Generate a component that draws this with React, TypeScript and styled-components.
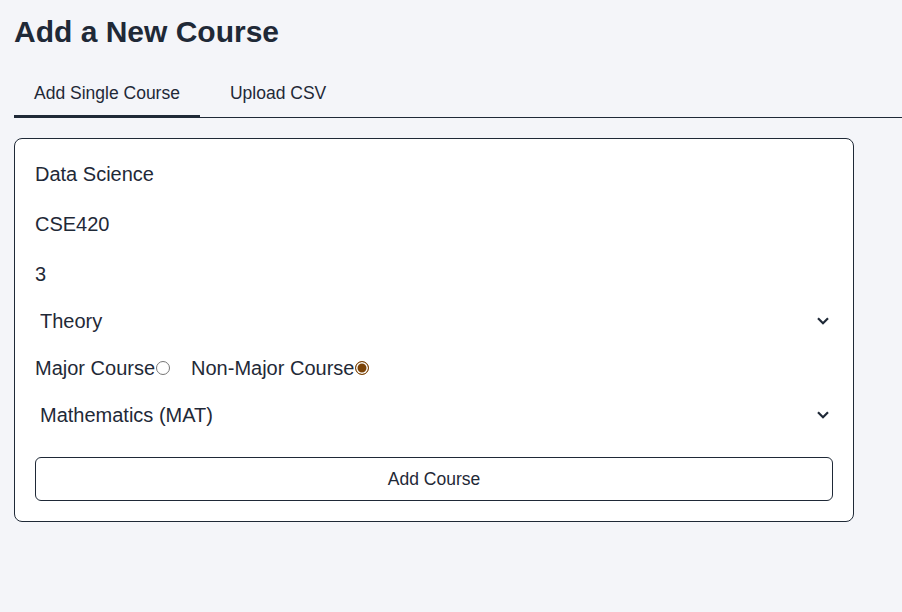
import React, { useState } from "react";
import styled, { createGlobalStyle, css } from "styled-components";

const GlobalStyle = createGlobalStyle`
  html, body { margin: 0; padding: 0; background: #f4f5f9; }
  body { font-family: "Liberation Sans", Arial, sans-serif; color: #1f2937; }
  * { box-sizing: border-box; }
`;

const chevron = `url("data:image/svg+xml;utf8,<svg xmlns='http://www.w3.org/2000/svg' width='12' height='8' viewBox='0 0 12 8'><polyline points='1,1.3 6,6.3 11,1.3' fill='none' stroke='%231f2937' stroke-width='2.2'/></svg>")`;

const Page = styled.div`
  padding: 14px 0 40px 14px;
  min-height: 612px;
`;

const Title = styled.h1`
  margin: 0;
  font-size: 30px;
  line-height: 36px;
  font-weight: 700;
  color: #1f2937;
`;

const TabBar = styled.div`
  display: flex;
  margin-top: 21px;
  border-bottom: 1px solid #1f2937;
`;

const Tab = styled.button<{ $active?: boolean }>`
  appearance: none;
  background: transparent;
  border: none;
  border-bottom: 3px solid transparent;
  margin-bottom: -1px;
  padding: 8px 20px 8px 20px;
  margin-right: 10px;
  font-family: inherit;
  font-size: 17.5px;
  line-height: 28px;
  color: #1f2937;
  cursor: pointer;
  ${(p) =>
    p.$active &&
    css`
      border-bottom-color: #1f2937;
    `}
`;

const Card = styled.form`
  margin-top: 20px;
  width: 840px;
  background: #ffffff;
  border: 1px solid #1f2937;
  border-radius: 8px;
  padding: 20px;
  display: flex;
  flex-direction: column;
  gap: 20px;
`;

const TextInput = styled.input`
  border: none;
  outline: none;
  background: transparent;
  padding: 0;
  height: 30px;
  font-family: inherit;
  font-size: 20px;
  color: #1f2937;
`;

const Select = styled.select`
  appearance: none;
  border: none;
  outline: none;
  background: transparent ${chevron} no-repeat right 4px center;
  padding: 0 24px 0 5px;
  height: 24px;
  font-family: inherit;
  font-size: 20px;
  color: #1f2937;
`;

const RadioRow = styled.div`
  display: flex;
  align-items: center;
  gap: 21px;
  height: 30px;
`;

const RadioLabel = styled.label`
  display: flex;
  align-items: center;
  font-size: 20px;
  color: #1f2937;
`;

const Radio = styled.input`
  appearance: none;
  margin: 0 0 0 1px;
  width: 14px;
  height: 14px;
  border-radius: 50%;
  border: 1px solid #767676;
  background: #fff;
  &:checked {
    border: 1.5px solid #7b4306;
    background: #7b4306;
    box-shadow: inset 0 0 0 1.5px #fff;
  }
`;

const SubmitButton = styled.button`
  margin-top: 10px;
  height: 44px;
  background: #fff;
  border: 1px solid #1f2937;
  border-radius: 6px;
  font-family: inherit;
  font-size: 17.5px;
  color: #1f2937;
  cursor: pointer;
`;

export default function App() {
  const [tab, setTab] = useState(0);
  const [major, setMajor] = useState(false);
  return (
    <Page>
      <GlobalStyle />
      <Title>Add a New Course</Title>
      <TabBar>
        <Tab $active={tab === 0} onClick={() => setTab(0)}>
          Add Single Course
        </Tab>
        <Tab $active={tab === 1} onClick={() => setTab(1)}>
          Upload CSV
        </Tab>
      </TabBar>
      <Card onSubmit={(e) => e.preventDefault()}>
        <TextInput defaultValue="Data Science" />
        <TextInput defaultValue="CSE420" />
        <TextInput defaultValue="3" />
        <Select defaultValue="Theory">
          <option>Theory</option>
          <option>Lab</option>
        </Select>
        <RadioRow>
          <RadioLabel>
            Major Course
            <Radio type="radio" name="major" checked={major} onChange={() => setMajor(true)} />
          </RadioLabel>
          <RadioLabel>
            Non-Major Course
            <Radio type="radio" name="major" checked={!major} onChange={() => setMajor(false)} />
          </RadioLabel>
        </RadioRow>
        <Select defaultValue="MAT">
          <option value="MAT">Mathematics (MAT)</option>
          <option value="CSE">Computer Science (CSE)</option>
        </Select>
        <SubmitButton type="submit">Add Course</SubmitButton>
      </Card>
    </Page>
  );
}
